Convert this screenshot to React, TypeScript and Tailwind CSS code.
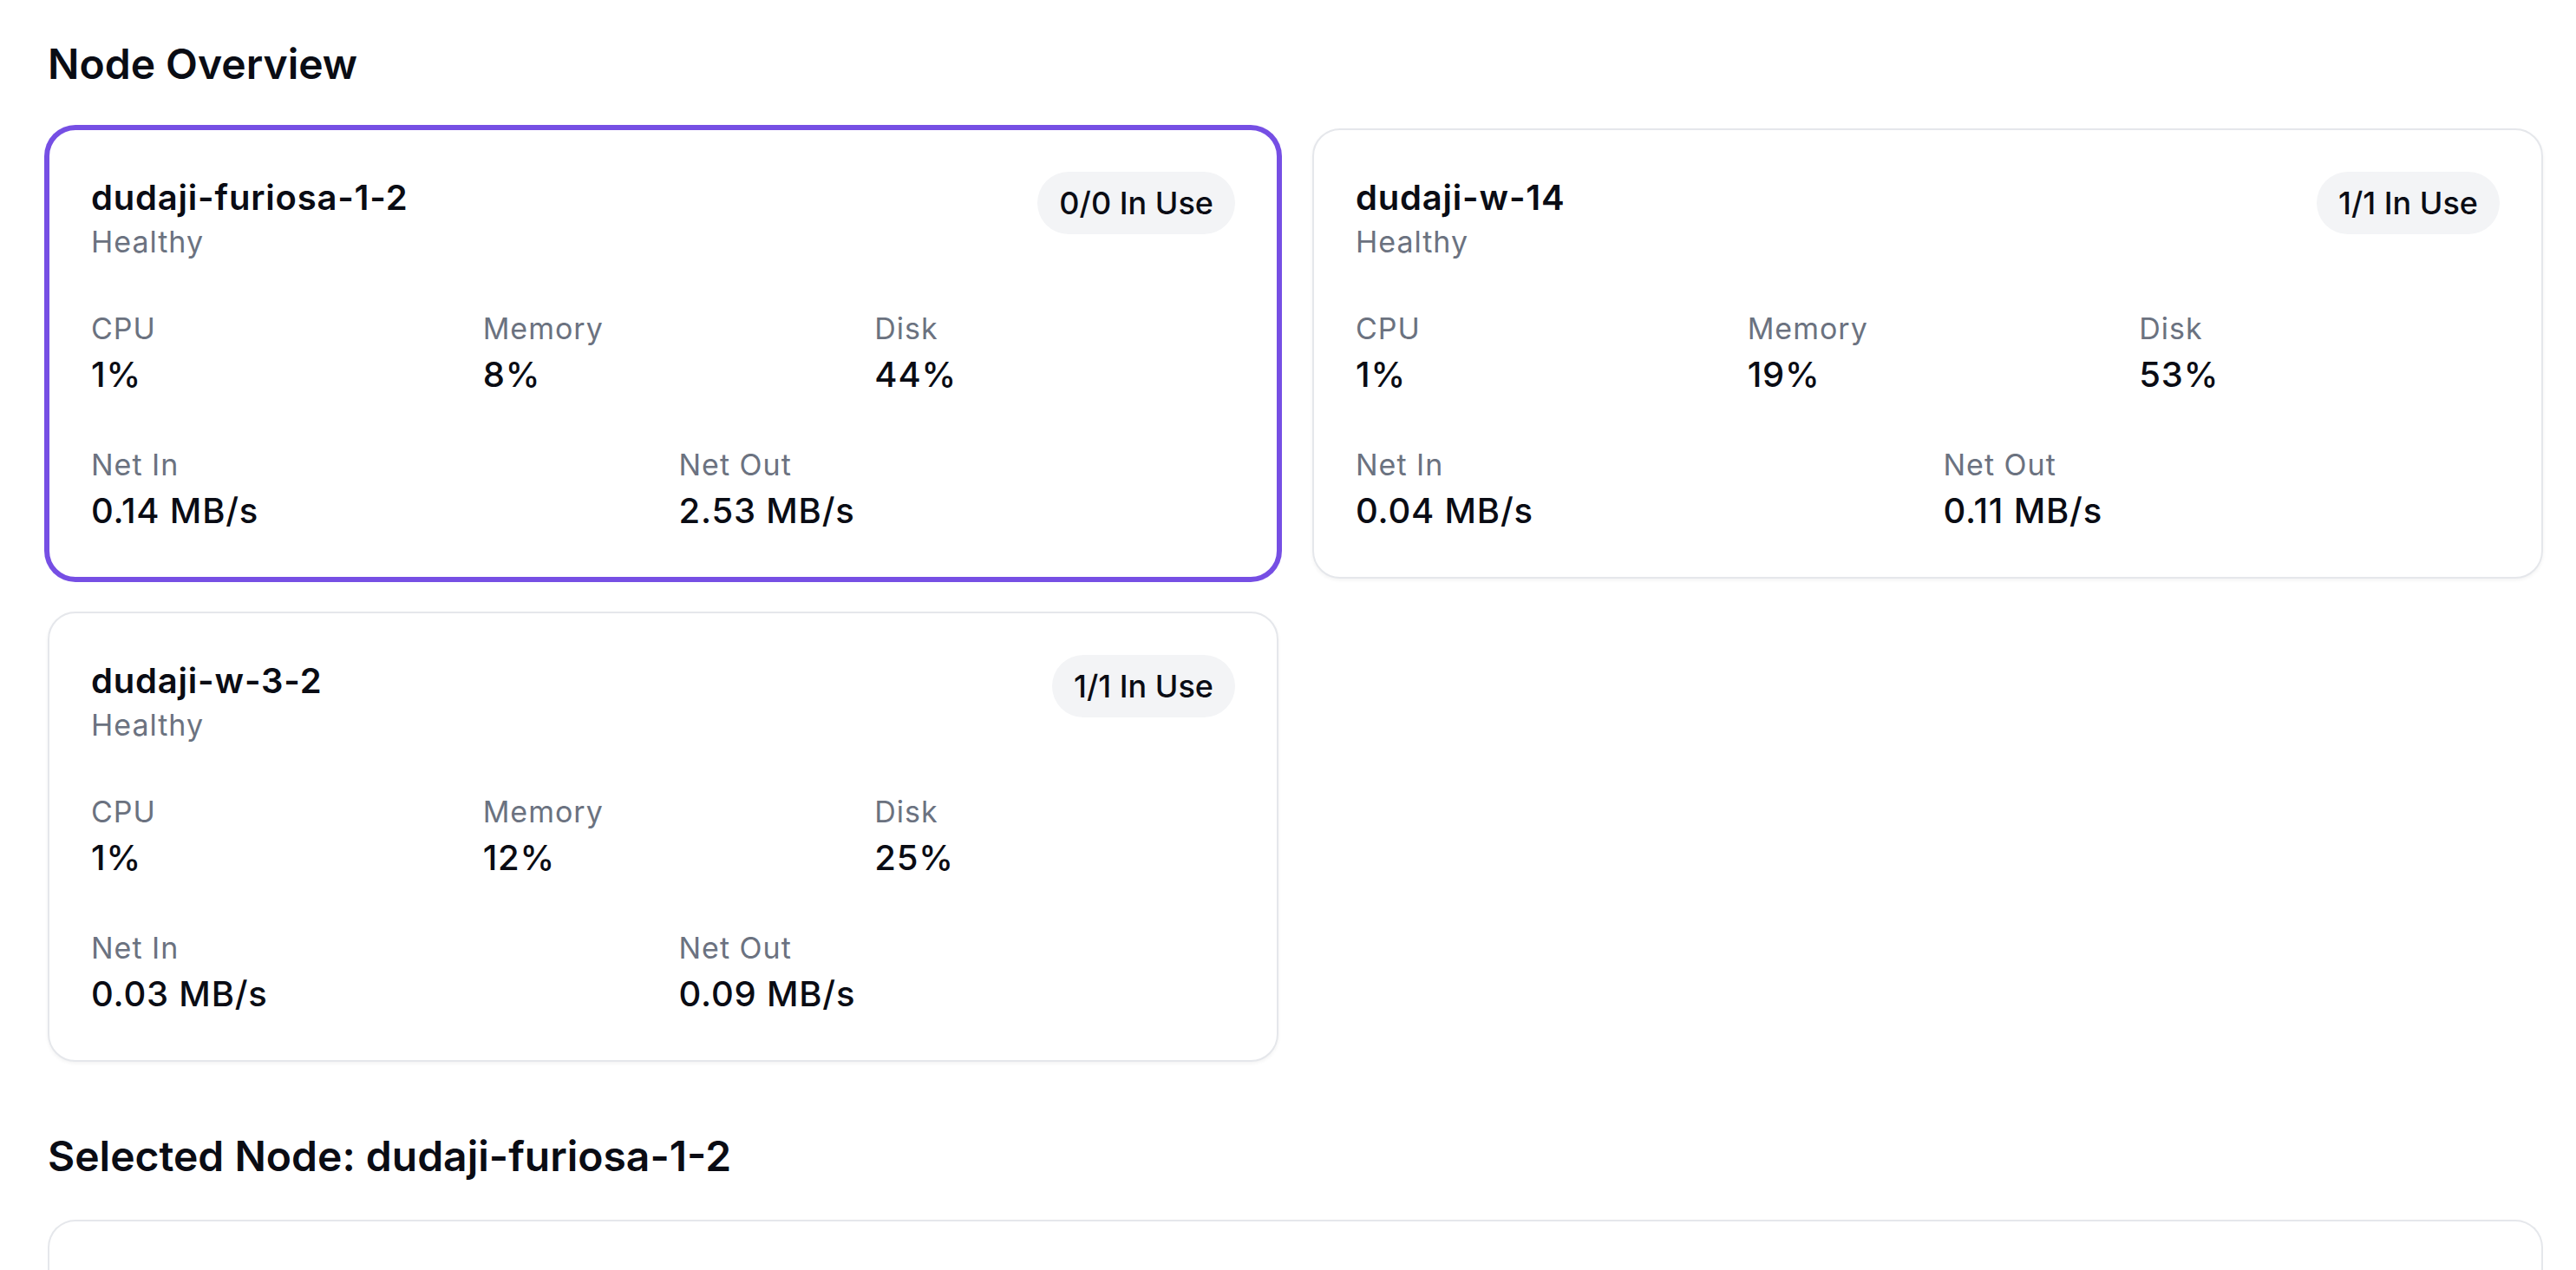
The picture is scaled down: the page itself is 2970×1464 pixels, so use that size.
const nodes = [
  {
    name: 'dudaji-furiosa-1-2',
    status: 'Healthy',
    usage: '0/0 In Use',
    cpu: '1%',
    memory: '8%',
    disk: '44%',
    netIn: '0.14 MB/s',
    netOut: '2.53 MB/s',
  },
  {
    name: 'dudaji-w-14',
    status: 'Healthy',
    usage: '1/1 In Use',
    cpu: '1%',
    memory: '19%',
    disk: '53%',
    netIn: '0.04 MB/s',
    netOut: '0.11 MB/s',
  },
  {
    name: 'dudaji-w-3-2',
    status: 'Healthy',
    usage: '1/1 In Use',
    cpu: '1%',
    memory: '12%',
    disk: '25%',
    netIn: '0.03 MB/s',
    netOut: '0.09 MB/s',
  },
]

type Node = (typeof nodes)[number]

function Stat({ label, value }: { label: string; value: string }) {
  return (
    <div>
      <div className="text-[34px] leading-[51px] tracking-[1px] text-[#6b7280]">{label}</div>
      <div className="text-[40px] leading-[56px] tracking-[0.8px] font-medium text-[#0a0c14]">{value}</div>
    </div>
  )
}

function NodeCard({ node, selected }: { node: Node; selected?: boolean }) {
  return (
    <div
      className={
        selected
          ? 'bg-white rounded-[32px] border-2 border-[#764fe4] ring-4 ring-[#764fe4] p-[48px]'
          : 'bg-white rounded-[32px] border-2 border-[#e5e7eb] shadow-[0_2px_4px_rgba(0,0,0,0.05)] p-[48px]'
      }
    >
      <div className="flex items-start justify-between">
        <div>
          <div className="text-[40px] leading-[60px] tracking-[0.8px] font-semibold text-[#0a0c14]">{node.name}</div>
          <div className="text-[34px] leading-[42px] tracking-[1px] text-[#6b7280]">{node.status}</div>
        </div>
        <span className="rounded-full bg-[#f3f4f6] px-[25px] py-[12px] text-[36px] leading-[48px] font-medium text-[#0a0c14]">
          {node.usage}
        </span>
      </div>
      <div className="mt-[53px] grid grid-cols-3 gap-x-[36px]">
        <Stat label="CPU" value={node.cpu} />
        <Stat label="Memory" value={node.memory} />
        <Stat label="Disk" value={node.disk} />
      </div>
      <div className="mt-[50px] grid grid-cols-2 gap-x-[36px]">
        <Stat label="Net In" value={node.netIn} />
        <Stat label="Net Out" value={node.netOut} />
      </div>
    </div>
  )
}

export default function App() {
  return (
    <div className="min-h-screen bg-white pl-[55px] pr-[38px] pt-[42px] font-['Inter',sans-serif] text-[#0a0c14]">
      <h2 className="text-[48px] leading-[64px] font-semibold">Node Overview</h2>
      <div className="mt-[42px] grid grid-cols-2 gap-x-[39px] gap-y-[38px]">
        {nodes.map((n, i) => (
          <NodeCard key={n.name} node={n} selected={i === 0} />
        ))}
      </div>
      <h2 className="mt-[77px] text-[48px] leading-[64px] font-semibold">Selected Node: dudaji-furiosa-1-2</h2>
      <div className="mt-[41px] h-[240px] rounded-t-[32px] border-2 border-b-0 border-[#e5e7eb] bg-white" />
    </div>
  )
}
